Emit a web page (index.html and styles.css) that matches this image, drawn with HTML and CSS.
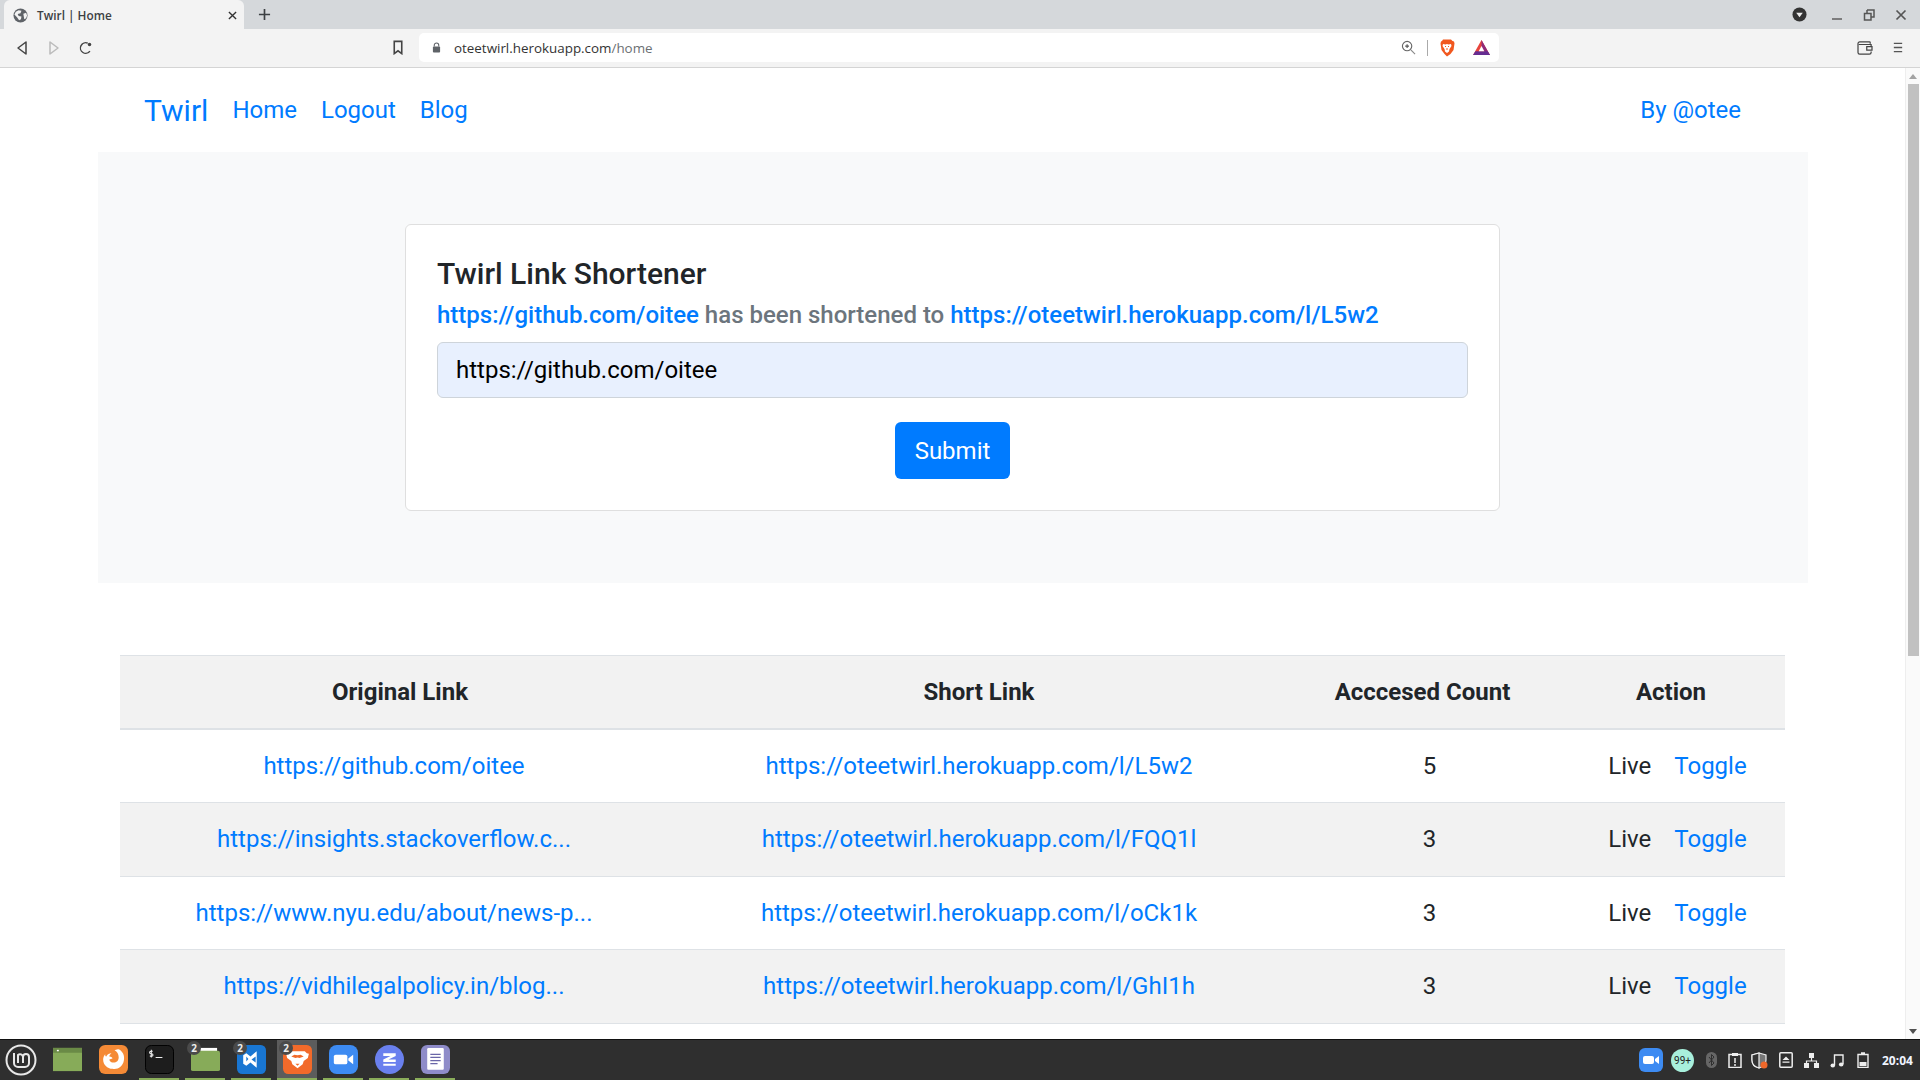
FILE: index.html
```html
<!DOCTYPE html>
<html lang="en">

<head>
    <meta charset="UTF-8">
    <meta name="viewport" content="width=device-width, initial-scale=1.0">
    <title>Twirl | Home</title>
    <link rel="stylesheet" href="styles.css">
</head>

<body>
    <div class="tabstrip">
        <div class="tab">
            <svg class="tab-icon" viewBox="0 0 16 16"><circle cx="8" cy="8" r="7.5" fill="#5f6368"/><path d="M3 4l3-1.5 3 .5-1 2.5-3 1 1 2 3 .5-.5 3-2 1-2-3-3-3zM11 6l3-1 1 3-1 3-2 1-.5-3z" fill="#f3f3f3"/></svg>
            <span class="tab-title">Twirl | Home</span>
            <svg class="tab-close" viewBox="0 0 10 10"><path d="M1 1l8 8M9 1l-8 8" stroke="#333" stroke-width="1.5"/></svg>
        </div>
        <svg class="new-tab" viewBox="0 0 14 14"><path d="M7 1v12M1 7h12" stroke="#3c4043" stroke-width="1.8"/></svg>
        <div class="window-btns">
            <svg class="win-menu" viewBox="0 0 16 16"><circle cx="8" cy="8" r="7.5" fill="#333"/><path d="M4.5 6h7L8 11z" fill="#eee"/></svg>
            <svg class="win-btn" viewBox="0 0 12 12"><path d="M1 10h10" stroke="#666" stroke-width="1.6"/></svg>
            <svg class="win-btn" viewBox="0 0 12 12"><path d="M4 1h7v7H8.500M4 1v3M1.500 4.500h6.500v6.500H1.500z" fill="none" stroke="#555" stroke-width="1.500"/></svg>
            <svg class="win-btn" viewBox="0 0 12 12"><path d="M1.500 1.500l9 9M10.500 1.500l-9 9" stroke="#555" stroke-width="1.700"/></svg>
        </div>
    </div>

    <div class="toolbar">
        <div class="nav-btns">
            <svg class="tool-icon" viewBox="0 0 14 16"><path d="M11 2v12L3 8z" fill="none" stroke="#444" stroke-width="1.500" stroke-linejoin="round"/></svg>
            <svg class="tool-icon" viewBox="0 0 14 16"><path d="M3 2v12l8-6z" fill="none" stroke="#bbb" stroke-width="1.500" stroke-linejoin="round"/></svg>
            <svg class="tool-icon" viewBox="0 0 16 16"><path d="M12.500 11.500A6 6 0 1 1 10 2.500" fill="none" stroke="#444" stroke-width="1.600"/><circle cx="12" cy="4" r="2" fill="#444"/></svg>
        </div>
        <svg class="bookmark" viewBox="0 0 12 16"><path d="M2 1.500h8v13l-4-3-4 3z" fill="none" stroke="#444" stroke-width="1.700"/></svg>
        <div class="urlbar">
            <svg class="lock" viewBox="0 0 10 12"><path d="M2.500 5V3.500a2.500 2.500 0 0 1 5 0V5" fill="none" stroke="#5f6368" stroke-width="1.200"/><rect x="1" y="5" width="8" height="6.500" rx="1" fill="#5f6368"/></svg>
            <span class="url">oteetwirl.herokuapp.com<span class="url-path">/home</span></span>
            <svg class="url-zoom" viewBox="0 0 16 16"><circle cx="6.500" cy="6.500" r="5" fill="none" stroke="#666" stroke-width="1.200"/><path d="M10.500 10.500l4.500 4.500" stroke="#888" stroke-width="1.200"/><path d="M6.500 4.500v4M4.500 6.500h4" stroke="#555" stroke-width="1.200"/></svg>
            <span class="url-sep"></span>
            <svg class="brave-small" viewBox="0 0 16 18"><path d="M4 .5h8l1.500 1.500 1.500.5.500 2-1 6.500-3 4L8 17.500 5.500 15l-3-4-1-6.500.500-2L3 2z" fill="#f1581f"/><path d="M4 5l2.500.5L8 5l1.500.5L12 5l.5 2-2 3-.5 2.500-2 1.500-2-1.500L5.500 10l-2-3z" fill="#fff"/><path d="M6 7.500h1M9 7.500h1M8 9v2" stroke="#f1581f" stroke-width="1"/></svg>
            <svg class="bat" viewBox="0 0 18 16"><path d="M9 0l9 16H0z" fill="#e8453c"/><path d="M9 0l9 16h-4L9 7z" fill="#8e2a7a"/><path d="M0 16l2.500-4h13l2.500 4z" fill="#662d91"/><path d="M9 6.500l3 5.500H6z" fill="#fff"/></svg>
        </div>
        <div class="tool-right">
            <svg class="wallet" viewBox="0 0 18 16"><path d="M15 3V2a1 1 0 0 0-1-1H3a2 2 0 0 0-2 2v10a2 2 0 0 0 2 2h11a2 2 0 0 0 2-2v-1M16 6V4H2M11 6.500h6v4h-6z" fill="none" stroke="#444" stroke-width="1.400"/></svg>
            <svg class="menu" viewBox="0 0 12 14"><path d="M1 2h10M1 7h10M1 12h10" stroke="#555" stroke-width="1.600"/></svg>
        </div>
    </div>

    <div class="viewport">
        <div class="page">
            <nav class="navbar">
                <a class="brand" href="#">Twirl</a>
                <a class="nav-link" href="#">Home</a>
                <a class="nav-link" href="#">Logout</a>
                <a class="nav-link" href="#">Blog</a>
                <a class="nav-link by" href="#">By @otee</a>
            </nav>

            <div class="jumbotron">
                <div class="card">
                    <h1 class="card-title">Twirl Link Shortener</h1>
                    <p class="result"><a href="#">https://github.com/oitee</a> has been shortened to <a href="#">https://oteetwirl.herokuapp.com/l/L5w2</a></p>
                    <input class="link-input" type="text" value="https://github.com/oitee">
                    <div class="submit-row"><button class="submit">Submit</button></div>
                </div>
            </div>

            <table class="links">
                <colgroup>
                    <col class="col-original">
                    <col class="col-short">
                    <col class="col-count">
                    <col class="col-action">
                </colgroup>
                <thead>
                    <tr>
                        <th>Original Link</th>
                        <th>Short Link</th>
                        <th>Acccesed Count</th>
                        <th class="th-action">Action</th>
                    </tr>
                </thead>
                <tbody>
                    <tr>
                        <td class="td-original"><a href="#">https://github.com/oitee</a></td>
                        <td><a href="#">https://oteetwirl.herokuapp.com/l/L5w2</a></td>
                        <td class="td-count">5</td>
                        <td class="td-action"><span class="status">Live</span><a href="#">Toggle</a></td>
                    </tr>
                    <tr>
                        <td class="td-original"><a href="#">https://insights.stackoverflow.c...</a></td>
                        <td><a href="#">https://oteetwirl.herokuapp.com/l/FQQ1l</a></td>
                        <td class="td-count">3</td>
                        <td class="td-action"><span class="status">Live</span><a href="#">Toggle</a></td>
                    </tr>
                    <tr>
                        <td class="td-original"><a href="#">https://www.nyu.edu/about/news-p...</a></td>
                        <td><a href="#">https://oteetwirl.herokuapp.com/l/oCk1k</a></td>
                        <td class="td-count">3</td>
                        <td class="td-action"><span class="status">Live</span><a href="#">Toggle</a></td>
                    </tr>
                    <tr>
                        <td class="td-original"><a href="#">https://vidhilegalpolicy.in/blog...</a></td>
                        <td><a href="#">https://oteetwirl.herokuapp.com/l/GhI1h</a></td>
                        <td class="td-count">3</td>
                        <td class="td-action"><span class="status">Live</span><a href="#">Toggle</a></td>
                    </tr>
                </tbody>
            </table>
        </div>

        <div class="scrollbar">
            <div class="arrow-up"></div>
            <div class="thumb"></div>
            <div class="arrow-down"></div>
        </div>
    </div>

    <div class="taskbar">
        <div class="mint">
            <svg viewBox="0 0 32 32"><circle cx="16" cy="16" r="14.500" fill="none" stroke="#e8e8e8" stroke-width="2"/><path d="M9 9v10a4 4 0 0 0 4 4h7a4 4 0 0 0 4-4v-6a3 3 0 0 0-6 0v6M18 13a3 3 0 0 0-5-2v8" fill="none" stroke="#e8e8e8" stroke-width="2"/></svg>
        </div>
        <div class="launcher">
            <svg viewBox="0 0 30 24"><rect width="30" height="24" fill="#87ab59"/><rect width="30" height="5" fill="#6a8a46"/><rect x="4" y="2" width="2" height="1.500" fill="#fff"/></svg>
        </div>
        <div class="launcher">
            <svg viewBox="0 0 28 28"><rect width="28" height="28" rx="6" fill="#f58a36"/><path d="M19 4c4 2 6 6 5 11-1 6-6 9-11 8-5 0-9-4-9-9 0-2 1-4 2-5 0 1 0 2 1 2 1-2 3-3 5-3-1 1-2 2-2 3 2 0 3 1 3 2l-3 1c0 2 2 3 4 3 3 0 5-2 5-5 0-4-2-6-4-7 2-1 3-1 4-1z" fill="#fff"/></svg>
        </div>
        <div class="launcher running">
            <svg viewBox="0 0 30 30"><rect x=".5" y=".5" width="29" height="29" rx="6" fill="#1d1d1d" stroke="#000"/><path d="M8 6.500H6a1.200 1.200 0 0 0 0 2.500h1a1.200 1.200 0 0 1 0 2.500H5M6.500 5v8M11 13h7" stroke="#eee" stroke-width="1.100" fill="none"/></svg>
        </div>
        <div class="launcher running">
            <span class="badge">2</span>
            <svg viewBox="0 0 30 24"><path d="M3 0h24v4H3z" fill="#fff"/><rect y="3" width="30" height="21" rx="2" fill="#87ab59"/></svg>
        </div>
        <div class="launcher running">
            <span class="badge">2</span>
            <svg viewBox="0 0 28 28"><rect width="28" height="28" rx="5" fill="#1976d2"/><path d="M19 6v16l-6-5-4 3-3-2v-8l3-2 4 3zM9 11v5l2-2.500zM14 14l4 3v-6z" fill="#fff" fill-rule="evenodd"/></svg>
        </div>
        <div class="launcher running active">
            <span class="badge">2</span>
            <svg viewBox="0 0 28 28"><rect width="28" height="28" rx="5" fill="#f26a2a"/><path d="M7 6h14l2 2 2 .5-1 4-4 3-1 3-5 4-5-4-1-3-4-3-1-4 2-.5zM8 11l4 1.500 2-.5 2 .5 4-1.500-3-1.500-3 .5-3-.5zM12 18h4l-2 2z" fill="#fff" fill-rule="evenodd"/></svg>
        </div>
        <div class="launcher running">
            <svg viewBox="0 0 30 30"><rect width="30" height="30" rx="8" fill="#3d8bf2"/><rect x="5" y="10" width="14" height="10" rx="2" fill="#fff"/><path d="M20 14l5-4v10l-5-4z" fill="#fff"/></svg>
        </div>
        <div class="launcher running">
            <svg viewBox="0 0 28 28"><circle cx="14" cy="14" r="14" fill="#6a80ee"/><path d="M8 8h12v2.500L13 14h7v2.500H8V14l7-3.500H8zM8 18h12v2H8z" fill="#fff"/></svg>
        </div>
        <div class="launcher running">
            <svg viewBox="0 0 28 28"><rect width="28" height="28" rx="6" fill="#8f8cc9"/><rect x="6" y="3" width="16" height="21" rx="1" fill="#fff"/><path d="M9 9h10M9 12h10M9 15h10M9 18h7" stroke="#6a66a8" stroke-width="1.200"/></svg>
        </div>

        <div class="tray">
            <svg class="tray-zoom" viewBox="0 0 24 24"><rect width="24" height="24" rx="6" fill="#3d8bf2"/><rect x="4" y="8" width="11" height="8" rx="2" fill="#fff"/><path d="M16 11l4-3v8l-4-3z" fill="#fff"/></svg>
            <span class="tray-count">99+</span>
            <svg class="tray-bt" viewBox="0 0 11 16"><rect width="11" height="16" rx="5.500" fill="#666"/><path d="M3 5l5 6-2.500 2.500v-11L8 5l-5 6" fill="none" stroke="#2f2f2f" stroke-width="1"/></svg>
            <svg class="tray-clip" viewBox="0 0 14 16"><path d="M4 2.500H1v13h12v-13h-3" fill="none" stroke="#eee" stroke-width="1.500"/><rect x="4" y="1" width="6" height="3" fill="#eee"/><path d="M7 6v5M7 12v2" stroke="#eee" stroke-width="1.500"/></svg>
            <svg class="tray-shield" viewBox="0 0 17 17"><path d="M8 1l7 2v5c0 4-3 7-7 8-4-1-7-4-7-8V3z" fill="#777" stroke="#eee" stroke-width="1.200"/><path d="M8 1v15c-4-1-7-4-7-8V3z" fill="#333" stroke="#eee" stroke-width="1.200"/><circle cx="13" cy="13" r="3.500" fill="#f0682a"/></svg>
            <svg class="tray-eject" viewBox="0 0 14 16"><rect x=".8" y=".8" width="12.400" height="14.400" rx="1" fill="none" stroke="#eee" stroke-width="1.500"/><path d="M7 4.500L10.500 8h-7zM3.500 9.500h7v1.200h-7z" fill="#eee"/></svg>
            <svg class="tray-net" viewBox="0 0 15 15"><rect x="5" y="0" width="5" height="5" fill="#eee"/><rect x="0" y="10" width="5" height="5" fill="#eee"/><rect x="10" y="10" width="5" height="5" fill="#eee"/><path d="M7.500 5v3M2.500 10V8h10v2" fill="none" stroke="#eee" stroke-width="1.200"/></svg>
            <svg class="tray-music" viewBox="0 0 14 15"><path d="M4.500 12V2h8.500v9" fill="none" stroke="#eee" stroke-width="1.400"/><ellipse cx="2.800" cy="12.500" rx="2.300" ry="2" fill="#eee"/><ellipse cx="11.200" cy="11.500" rx="2.300" ry="2" fill="#eee"/></svg>
            <svg class="tray-battery" viewBox="0 0 12 16"><path d="M4 1h4M1 2.500h10v13H1z" fill="none" stroke="#eee" stroke-width="1.400"/><rect x="2.500" y="10" width="7" height="4" fill="#eee"/></svg>
            <span class="clock">20:04</span>
        </div>
    </div>
</body>

</html>
```

FILE: styles.css
```css
* {
    margin: 0;
    padding: 0;
    box-sizing: border-box;
}

html,
body {
    height: 1080px;
    overflow: hidden;
}

body {
    display: flex;
    flex-direction: column;
    font-family: Roboto, "Liberation Sans", sans-serif;
    background: #fff;
}

svg {
    display: block;
}

a {
    color: #007bff;
    text-decoration: none;
}

/* browser window */
.tabstrip {
    height: 29px;
    flex: none;
    display: flex;
    align-items: flex-end;
    padding-left: 4px;
    background: #d5d8db;
}

.tab {
    width: 240px;
    height: 29px;
    display: flex;
    align-items: center;
    padding: 1px 7px 0 9px;
    background: #f3f3f3;
    border-radius: 6px 6px 0 0;
}

.tab-icon {
    width: 15px;
    height: 15px;
    margin-right: 9px;
}

.tab-title {
    flex: 1;
    font-family: "Open Sans", sans-serif;
    font-size: 11.8px;
    font-weight: 600;
    color: #3c4043;
}

.tab-close {
    width: 9px;
    height: 9px;
}

.new-tab {
    width: 13px;
    height: 13px;
    margin: 0 0 8px 14px;
}

.window-btns {
    margin-left: auto;
    align-self: center;
    display: flex;
    align-items: center;
    gap: 20px;
    padding-right: 13px;
}

.win-menu {
    width: 15px;
    height: 15px;
    margin-right: 4px;
}

.win-btn {
    width: 12px;
    height: 12px;
}

.toolbar {
    height: 39px;
    flex: none;
    display: flex;
    align-items: center;
    padding-bottom: 1px;
    background: #f3f3f3;
    border-bottom: 1px solid #d4d4d4;
}

.nav-btns {
    display: flex;
    align-items: center;
    gap: 18px;
    padding-left: 15px;
}

.tool-icon {
    width: 14px;
    height: 16px;
}

.bookmark {
    width: 12px;
    height: 15px;
    margin-left: 299px;
}

.urlbar {
    width: 1080px;
    height: 29px;
    margin-left: 15px;
    display: flex;
    align-items: center;
    padding: 0 9px 0 13px;
    background: #fff;
    border-radius: 5px;
}

.lock {
    width: 9px;
    height: 11px;
    margin-right: 13px;
}

.url {
    flex: 1;
    font-family: "Open Sans", sans-serif;
    font-size: 13.4px;
    color: #333;
}

.url-path {
    color: #6b6f73;
}

.url-zoom {
    width: 15px;
    height: 15px;
}

.url-sep {
    width: 1px;
    height: 16px;
    margin: 0 11px;
    background: #aaa;
}

.brave-small {
    width: 16px;
    height: 18px;
    margin-right: 18px;
}

.bat {
    width: 17px;
    height: 15px;
}

.tool-right {
    margin-left: auto;
    display: flex;
    align-items: center;
    gap: 20px;
    padding-right: 17px;
}

.wallet {
    width: 16px;
    height: 14px;
}

.menu {
    width: 10px;
    height: 13px;
}

/* page */
.viewport {
    flex: 1;
    min-height: 0;
    display: flex;
}

.page {
    flex: 1;
    min-width: 0;
    overflow: hidden;
}

.navbar {
    height: 84px;
    display: flex;
    align-items: center;
    padding: 0 164px 0 144px;
    font-size: 24px;
}

.brand {
    font-size: 30px;
    margin-right: 12px;
}

.nav-link {
    padding: 0 12px;
}

.by {
    margin-left: auto;
    padding: 0;
}

.jumbotron {
    width: 1710px;
    margin: 0 0 72px 98px;
    padding: 72px 0 72px 307px;
    background: #f8f9fa;
}

.card {
    width: 1095px;
    height: 287px;
    padding: 31px 31px 0;
    background: #fff;
    border: 1px solid #dfdfdf;
    border-radius: 6px;
}

.card-title {
    font-size: 30px;
    font-weight: 500;
    line-height: 36px;
    color: #212529;
}

.result {
    margin: 5px 0 9px;
    font-size: 24px;
    font-weight: 500;
    line-height: 36px;
    color: #6c757d;
}

.link-input {
    display: block;
    width: 100%;
    height: 56px;
    padding: 0 18px;
    font-family: inherit;
    font-size: 24px;
    color: #000;
    background: #e8f0fe;
    border: 1.5px solid #ced4da;
    border-radius: 6px;
    outline: 0;
}

.submit-row {
    display: flex;
    justify-content: center;
    margin-top: 24px;
}

.submit {
    width: 115px;
    height: 57px;
    font-family: inherit;
    font-size: 24px;
    color: #fff;
    background: #007bff;
    border: 0;
    border-radius: 6px;
}

.links {
    width: 1665px;
    margin-left: 120px;
    table-layout: fixed;
    border-collapse: collapse;
    font-size: 24px;
    line-height: 36px;
    color: #212529;
    text-align: center;
}

.col-original {
    width: 560px;
}

.col-short {
    width: 598px;
}

.col-count {
    width: 289px;
}

.col-action {
    width: 218px;
}

.links th {
    height: 73.5px;
    padding: 18px;
    font-weight: 700;
    background: #f2f2f2;
    border-top: 1.5px solid #dee2e6;
    border-bottom: 2px solid #dee2e6;
}

.links td {
    height: 73.5px;
    padding: 18px;
    border-bottom: 1.5px solid #dee2e6;
}

.links tbody tr:nth-child(even) td {
    background: #f2f2f2;
}

.links .th-action {
    padding-right: 28px;
}

.links .td-original {
    padding-right: 30px;
}

.links .td-count {
    padding-left: 32px;
}

.links .td-action {
    padding: 18px 0 18px 3px;
}

.status {
    margin-right: 23px;
    color: #212529;
}

.scrollbar {
    width: 15px;
    flex: none;
    display: flex;
    flex-direction: column;
    align-items: center;
    background: #fafafa;
    border-left: 1px solid #eee;
}

.arrow-up {
    width: 0;
    height: 0;
    margin: 6px 0 5px;
    border: 4px solid transparent;
    border-top: 0;
    border-bottom: 5px solid #a3a3a3;
}

.thumb {
    width: 11px;
    height: 572px;
    background: #c1c1c1;
}

.arrow-down {
    width: 0;
    height: 0;
    margin-top: auto;
    margin-bottom: 5px;
    border: 4px solid transparent;
    border-bottom: 0;
    border-top: 5px solid #505050;
}

/* desktop panel */
.taskbar {
    height: 41px;
    flex: none;
    display: flex;
    align-items: stretch;
    gap: 6px;
    padding-left: 1px;
    background: #2f2f2f;
    border-top: 1px solid #111;
}

.mint {
    width: 40px;
    display: flex;
    align-items: center;
    justify-content: center;
}

.mint svg {
    width: 32px;
    height: 32px;
}

.launcher {
    position: relative;
    width: 40px;
    display: flex;
    align-items: center;
    justify-content: center;
    border-bottom: 2px solid transparent;
}

.launcher svg {
    width: 29px;
    height: 29px;
}

.launcher.running {
    border-bottom-color: #8aad5a;
}

.launcher.active {
    background: #5c5c5c;
}

.badge {
    position: absolute;
    top: 1px;
    left: 2px;
    width: 14px;
    height: 14px;
    font-family: "Open Sans", sans-serif;
    font-size: 10px;
    font-weight: 700;
    line-height: 14px;
    text-align: center;
    color: #eee;
    background: #4a4a4a;
    border-radius: 50%;
}

.tray {
    margin-left: auto;
    display: flex;
    align-items: center;
    gap: 11px;
    padding-right: 5px;
}

.tray-zoom {
    width: 24px;
    height: 24px;
    margin-right: -3px;
}

.tray-count {
    width: 23px;
    height: 23px;
    font-size: 10px;
    line-height: 23px;
    text-align: center;
    color: #222;
    background: #a8f0dc;
    border-radius: 50%;
}

.tray-bt {
    width: 11px;
    height: 16px;
    margin-left: 1px;
}

.tray-clip,
.tray-eject {
    width: 14px;
    height: 16px;
}

.tray-shield {
    width: 17px;
    height: 17px;
    margin-left: -2px;
}

.tray-net {
    width: 15px;
    height: 15px;
}

.tray-music {
    width: 14px;
    height: 15px;
}

.tray-battery {
    width: 12px;
    height: 16px;
    margin-left: 2px;
}

.clock {
    width: 33px;
    margin-left: 2px;
    font-family: "Open Sans", sans-serif;
    font-size: 12px;
    font-weight: 700;
    color: #f0f4ff;
    white-space: nowrap;
}
```
